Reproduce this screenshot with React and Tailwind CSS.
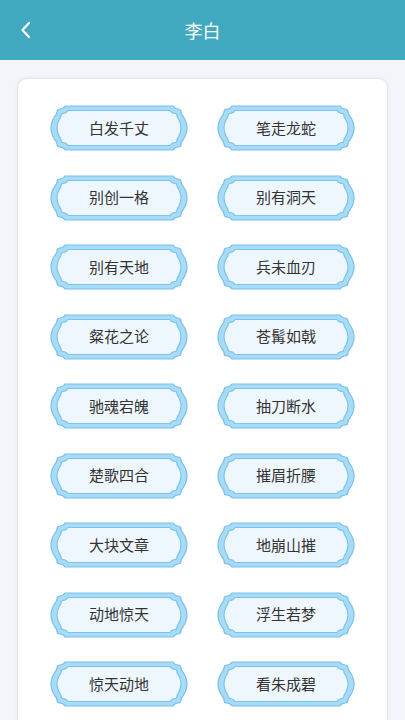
import React from "react";

const idioms = [
  "白发千丈",
  "笔走龙蛇",
  "别创一格",
  "别有洞天",
  "别有天地",
  "兵未血刃",
  "粲花之论",
  "苍髯如戟",
  "驰魂宕魄",
  "抽刀断水",
  "楚歌四合",
  "摧眉折腰",
  "大块文章",
  "地崩山摧",
  "动地惊天",
  "浮生若梦",
  "惊天动地",
  "看朱成碧",
];

// ornate frame behind each idiom
const Frame = () => (
  <svg className="absolute inset-0" width="140" height="46" viewBox="0 0 140 46">
    <path
      d="M16 1 H124 Q126 4 129 4 Q132 4 132 7 Q132 9 134 11 Q142 23 134 35 Q132 37 132 39 Q132 42 129 42 Q126 42 124 45 H16 Q14 42 11 42 Q8 42 8 39 Q8 37 6 35 Q-2 23 6 11 Q8 9 8 7 Q8 4 11 4 Q14 4 16 1 Z"
      fill="#a8dbf6"
      stroke="#78c1ec"
      strokeWidth="1.2"
    />
    <path
      d="M19 5.5 H121 Q123 8.5 126 8.5 Q128 8.5 128 11 Q128 12.5 129.5 14 Q134.5 23 129.5 32 Q128 33.5 128 35 Q128 37.5 126 37.5 Q123 37.5 121 40.5 H19 Q17 37.5 14 37.5 Q12 37.5 12 35 Q12 33.5 10.5 32 Q5.5 23 10.5 14 Q12 12.5 12 11 Q12 8.5 14 8.5 Q17 8.5 19 5.5 Z"
      fill="#eff7fe"
      stroke="#7cc4ee"
      strokeWidth="1.2"
    />
  </svg>
);

function Badge({ text }) {
  return (
    <div className="relative w-[140px] h-[46px] flex items-center justify-center">
      <Frame />
      <span className="relative text-[15px] text-[#333]">{text}</span>
    </div>
  );
}

export default function App() {
  return (
    <div
      className="w-[405px] h-[720px] overflow-hidden bg-[#f2f6fb]"
      style={{ fontFamily: '"Noto Sans CJK SC", "Noto Sans", sans-serif' }}
    >
      <div className="relative h-[60px] bg-[#40a9bf] flex items-center justify-center">
        <svg
          className="absolute left-[19px] top-[21px]"
          width="14"
          height="18"
          viewBox="0 0 14 18"
          fill="none"
          stroke="white"
          strokeWidth="2.2"
          strokeLinecap="round"
          strokeLinejoin="round"
        >
          <path d="M10 2 L3.5 9 L10 16" />
        </svg>
        <span className="text-white text-[18px]">李白</span>
      </div>
      <div className="mx-[17px] mt-[18px] h-[700px] rounded-[10px] bg-white border border-[#e3e7ee] shadow-[0_0_4px_rgba(0,0,0,0.06)] px-[31px] pt-[26px]">
        <div className="grid grid-cols-[140px_140px] gap-x-[27px] gap-y-[23.5px]">
          {idioms.map((t) => (
            <Badge key={t} text={t} />
          ))}
        </div>
      </div>
    </div>
  );
}
